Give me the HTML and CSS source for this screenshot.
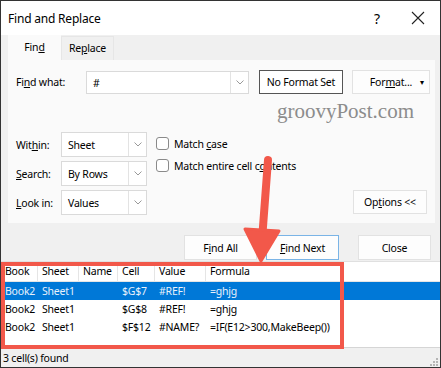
FILE: index.html
```html
<!DOCTYPE html>
<html lang="en">
<head>
    <meta charset="UTF-8">
    <meta name="viewport" content="width=device-width, initial-scale=1.0">
    <title>Find and Replace</title>
    <link rel="stylesheet" href="styles.css">
</head>
<body>
<div class="window">
    <div class="titlebar">
        <span class="title">Find and Replace</span>
        <span class="help">?</span>
        <svg class="close-x" width="14" height="14" viewBox="0 0 14 14">
            <path d="M1 1 L13 13 M13 1 L1 13" stroke="#222" stroke-width="1.1" fill="none"/>
        </svg>
    </div>

    <div class="tabs">
        <div class="tab active">Fin<u>d</u></div>
        <div class="tab">Re<u>p</u>lace</div>
    </div>

    <div class="panel">
        <div class="find-row">
            <label class="find-label">Fi<u>n</u>d what:</label>
            <div class="combo find-combo">
                <span class="combo-text">#</span>
                <span class="drop"><svg width="8" height="5" viewBox="0 0 8 5"><path d="M0.5 0.5 L4 4 L7.5 0.5" stroke="#999" fill="none"/></svg></span>
            </div>
            <button class="btn no-format">No Format Set</button>
            <button class="btn format-btn">For<u>m</u>at...<span class="caret">&#9662;</span></button>
        </div>

        <div class="watermark">groovyPost.com</div>

        <div class="options">
            <div class="selects">
                <label>Wit<u>h</u>in:</label>
                <div class="combo"><span class="combo-text">Sheet</span><span class="drop"><svg width="8" height="5" viewBox="0 0 8 5"><path d="M0.5 0.5 L4 4 L7.5 0.5" stroke="#999" fill="none"/></svg></span></div>
                <label><u>S</u>earch:</label>
                <div class="combo"><span class="combo-text">By Rows</span><span class="drop"><svg width="8" height="5" viewBox="0 0 8 5"><path d="M0.5 0.5 L4 4 L7.5 0.5" stroke="#999" fill="none"/></svg></span></div>
                <label><u>L</u>ook in:</label>
                <div class="combo"><span class="combo-text">Values</span><span class="drop"><svg width="8" height="5" viewBox="0 0 8 5"><path d="M0.5 0.5 L4 4 L7.5 0.5" stroke="#999" fill="none"/></svg></span></div>
            </div>
            <div class="checks">
                <div class="check"><span class="box"></span><span>Match <u>c</u>ase</span></div>
                <div class="check"><span class="box"></span><span>Match entire cell c<u>o</u>ntents</span></div>
            </div>
            <button class="btn options-btn">Op<u>t</u>ions &lt;&lt;</button>
        </div>
    </div>

    <div class="actions">
        <button class="btn action">F<u>i</u>nd All</button>
        <button class="btn action focused"><u>F</u>ind Next</button>
        <button class="btn action close-btn">Close</button>
    </div>

    <div class="results">
        <div class="row head">
            <span class="c-book">Book</span>
            <span class="c-sheet">Sheet</span>
            <span class="c-name">Name</span>
            <span class="c-cell">Cell</span>
            <span class="c-value">Value</span>
            <span class="c-formula">Formula</span>
        </div>
        <div class="row selected">
            <span class="c-book">Book2</span>
            <span class="c-sheet">Sheet1</span>
            <span class="c-name"></span>
            <span class="c-cell">$G$7</span>
            <span class="c-value">#REF!</span>
            <span class="c-formula">=ghjg</span>
        </div>
        <div class="row">
            <span class="c-book">Book2</span>
            <span class="c-sheet">Sheet1</span>
            <span class="c-name"></span>
            <span class="c-cell">$G$8</span>
            <span class="c-value">#REF!</span>
            <span class="c-formula">=ghjg</span>
        </div>
        <div class="row">
            <span class="c-book">Book2</span>
            <span class="c-sheet">Sheet1</span>
            <span class="c-name"></span>
            <span class="c-cell">$F$12</span>
            <span class="c-value">#NAME?</span>
            <span class="c-formula">=IF(E12&gt;300,MakeBeep())</span>
        </div>
    </div>

    <div class="status">
        <span>3 cell(s) found</span>
        <svg class="grip" width="8" height="8" viewBox="0 0 8 8">
            <rect x="6" y="0" width="2" height="2" fill="#b5b5b5"/>
            <rect x="3" y="3" width="2" height="2" fill="#b5b5b5"/>
            <rect x="6" y="3" width="2" height="2" fill="#b5b5b5"/>
            <rect x="0" y="6" width="2" height="2" fill="#b5b5b5"/>
            <rect x="3" y="6" width="2" height="2" fill="#b5b5b5"/>
            <rect x="6" y="6" width="2" height="2" fill="#b5b5b5"/>
        </svg>
    </div>

    <!-- annotation drawn over the dialog -->
    <div class="highlight"></div>
    <svg class="arrow" width="441" height="368" viewBox="0 0 441 368">
        <line x1="268" y1="160" x2="262" y2="240" stroke="#f2584a" stroke-width="8" stroke-linecap="round"/>
        <polygon points="245,229 279,231 261,261" fill="#f2584a" stroke="#f2584a" stroke-width="3" stroke-linejoin="round"/>
    </svg>
</div>
</body>
</html>
```

FILE: styles.css
```css
body {
    margin: 0;
    font-family: "Noto Sans", "Open Sans", sans-serif;
    font-size: 10.5px;
    letter-spacing: -0.2px;
    color: #000;
}

.window {
    position: relative;
    width: 441px;
    height: 368px;
    box-sizing: border-box;
    border: 1px solid #333;
    background-color: #f0f0f0;
    display: flex;
    flex-direction: column;
    overflow: hidden;
}

/* Title bar */
.titlebar {
    height: 34px;
    background-color: #fff;
    display: flex;
    align-items: center;
    padding-left: 7px;
}

.title {
    font-size: 12px;
    flex: 1;
}

.help {
    font-size: 14px;
    margin-right: 31px;
}

.close-x {
    margin-right: 15px;
}

/* Tabs */
.tabs {
    display: flex;
    height: 25px;
    padding-left: 7px;
}

.tab {
    width: 53px;
    text-align: center;
    line-height: 25px;
    box-sizing: border-box;
}

.tab.active {
    background-color: #fafafa;
}

.tab:not(.active) {
    margin-top: 1px;
    border: 1px solid #e6e6e6;
    border-bottom: none;
    line-height: 22px;
}

/* Panel */
.panel {
    background-color: #fafafa;
    margin: 0 5px 0 7px;
    height: 163px;
    padding: 10px 4px 0 8px;
    box-sizing: border-box;
}

.find-row {
    display: flex;
    align-items: center;
}

.find-label {
    width: 70px;
}

.combo {
    display: flex;
    height: 23px;
    box-sizing: border-box;
    border: 1px solid #dadada;
    background-color: #fff;
}

.combo-text {
    flex: 1;
    padding-left: 6px;
    line-height: 22px;
}

.drop {
    width: 17px;
    border-left: 1px solid #e3e3e3;
    display: flex;
    align-items: center;
    justify-content: center;
}

.find-combo {
    width: 163px;
}

.btn {
    font-family: inherit;
    font-size: 10.5px;
    letter-spacing: -0.2px;
    color: #000;
    background-color: #fdfdfd;
    border: 1px solid #e2e2e2;
    height: 24px;
    padding: 0;
    box-sizing: border-box;
}

.no-format {
    width: 84px;
    margin-left: 10px;
    border-color: #555;
    background-color: #fff;
}

.format-btn {
    width: 78px;
    margin-left: 9px;
    position: relative;
}

.caret {
    position: absolute;
    right: 5px;
    top: 5px;
    font-size: 8px;
}

.watermark {
    height: 38px;
    font-family: "Liberation Serif", serif;
    font-size: 21px;
    letter-spacing: 0;
    color: #8c8c8c;
    text-align: right;
    padding-right: 17px;
    line-height: 34px;
    box-sizing: border-box;
}

.options {
    display: flex;
    align-items: flex-start;
}

.selects {
    display: grid;
    grid-template-columns: 45px 86px;
    grid-auto-rows: 25px;
    row-gap: 4px;
    align-items: center;
}

.selects .combo {
    height: 25px;
}

.selects .combo-text {
    line-height: 24px;
}

.checks {
    margin-left: 9px;
    padding-top: 5px;
    display: flex;
    flex-direction: column;
    gap: 9px;
}

.check {
    display: flex;
    align-items: center;
    height: 13px;
}

.box {
    width: 11px;
    height: 11px;
    border: 1px solid #8a8a8a;
    border-radius: 3px;
    background-color: #fff;
    margin-right: 5px;
}

.options-btn {
    width: 74px;
    margin-left: auto;
    margin-top: 58px;
    margin-right: 4px;
}

/* Bottom buttons */
.actions {
    height: 38px;
    display: flex;
    align-items: flex-end;
    padding-left: 183px;
    padding-bottom: 1px;
    box-sizing: border-box;
}

.action {
    width: 75px;
    height: 25px;
    margin-right: 9px;
}

.action.focused {
    border-color: #7ab4e6;
}

.action.close-btn {
    margin-left: 10px;
}

/* Results list */
.results {
    height: 87px;
    background-color: #fff;
    border-top: 1px solid #e0e0e0;
    border-bottom: 1px solid #d5d5d5;
    box-sizing: border-box;
}

.row {
    display: flex;
    height: 18px;
    line-height: 18px;
    white-space: nowrap;
}

.row span {
    padding-left: 4px;
    box-sizing: border-box;
}

.row.head {
    height: 19px;
    line-height: 19px;
    border-bottom: 1px solid #e5e5e5;
}

.row.head span {
    border-right: 1px solid #e5e5e5;
}

.row.selected {
    background-color: #0078d7;
    color: #e8f1fb;
}

.c-book { width: 37px; }
.c-sheet { width: 41px; }
.c-name { width: 39px; }
.c-cell { width: 37px; }
.c-value { width: 51px; }
.c-formula { flex: 1; }

.row.head .c-formula {
    border-right: none;
}

/* Status bar */
.status {
    flex: 1;
    display: flex;
    align-items: center;
    justify-content: space-between;
    padding: 0 2px 0 2px;
}

.grip {
    align-self: flex-end;
    margin-bottom: 1px;
}

/* Annotation overlay */
.highlight {
    position: absolute;
    left: 0;
    top: 261px;
    width: 343px;
    height: 87px;
    box-sizing: border-box;
    border: 4px solid #f2584a;
}

.arrow {
    position: absolute;
    left: -1px;
    top: -1px;
    pointer-events: none;
}
```
